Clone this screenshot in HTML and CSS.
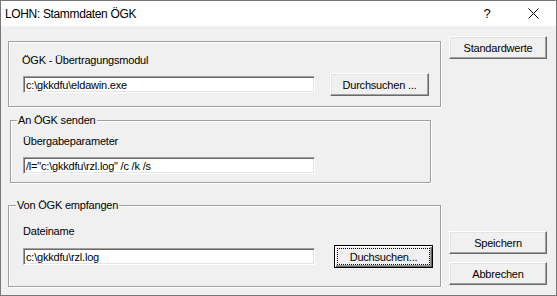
FILE: index.html
```html
<!DOCTYPE html>
<html lang="de">
<head>
    <meta charset="UTF-8">
    <title>LOHN: Stammdaten ÖGK</title>
    <link rel="stylesheet" href="styles.css">
</head>
<body>
    <div class="window">
        <div class="titlebar">
            <span class="title">LOHN: Stammdaten ÖGK</span>
            <span class="caption-btn help">?</span>
            <span class="caption-btn close">
                <svg width="11" height="11" viewBox="0 0 11 11"><path d="M0.5 0.5L10.5 10.5M10.5 0.5L0.5 10.5" stroke="#000" stroke-width="1" fill="none"/></svg>
            </span>
        </div>

        <div class="client">
            <div class="groups">
                <div class="group group-module">
                    <div class="label">ÖGK - Übertragungsmodul</div>
                    <div class="row row-module">
                        <input class="field" type="text" value="c:\gkkdfu\eldawin.exe">
                        <button class="btn btn-browse">Durchsuchen ...</button>
                    </div>
                </div>

                <fieldset class="group group-send">
                    <legend>An ÖGK senden</legend>
                    <div class="label">Übergabeparameter</div>
                    <input class="field" type="text" value='/l="c:\gkkdfu\rzl.log" /c /k /s'>
                </fieldset>

                <fieldset class="group group-receive">
                    <legend>Von ÖGK empfangen</legend>
                    <div class="label">Dateiname</div>
                    <div class="row row-receive">
                        <input class="field" type="text" value="c:\gkkdfu\rzl.log">
                        <button class="btn btn-browse btn-default"><span class="focus-ring">Duchsuchen...</span></button>
                    </div>
                </fieldset>
            </div>

            <div class="actions">
                <button class="btn">Standardwerte</button>
                <button class="btn btn-save">Speichern</button>
                <button class="btn btn-cancel">Abbrechen</button>
            </div>
        </div>
    </div>
</body>
</html>
```

FILE: styles.css
```css
* {
    box-sizing: border-box;
}
html, body {
    margin: 0;
    padding: 0;
}
body {
    font-family: "Liberation Sans", Arial, sans-serif;
    font-size: 11px;
    letter-spacing: -0.2px;
    color: #000;
    background: #f0f0f0;
}
.window {
    width: 557px;
    height: 296px;
    border: 1px solid #777;
    background: #f0f0f0;
    display: flex;
    flex-direction: column;
}
.titlebar {
    height: 25px;
    background: #fff;
    display: flex;
    align-items: center;
}
.title {
    flex: 1;
    padding-left: 4px;
    font-size: 12px;
    letter-spacing: -0.35px;
}
.caption-btn {
    width: 46px;
    height: 25px;
    display: flex;
    align-items: center;
    justify-content: center;
}
.help {
    font-size: 13px;
}
.close svg {
    display: block;
}
.client {
    flex: 1;
    display: flex;
    padding-left: 7px;
}
.groups {
    width: 433px;
    padding-top: 15px;
    display: flex;
    flex-direction: column;
}
.group {
    margin: 0;
    border: 1px solid #a0a0a0;
    box-shadow: inset 1px 1px 0 #fff, 1px 1px 0 #fff;
    min-width: 0;
}
.group legend {
    padding: 0 1px;
    font-size: 11px;
    line-height: 13px;
    background: #f0f0f0;
}
.label {
    line-height: 13px;
}
.group-module {
    height: 66px;
    padding: 12px 0 0 13px;
}
.group-send {
    width: 421px;
    margin: 7px 0 0 2px;
    padding: 8px 0 8px 12px;
}
.group-send legend {
    margin-left: -6px;
}
.group-send .field {
    display: block;
    margin-top: 9px;
}
.group-receive {
    width: 433px;
    margin-top: 16px;
    padding: 13px 0 18px 14px;
}
.group-receive legend {
    margin-left: -7px;
}
.row {
    display: flex;
    align-items: center;
}
.row-module {
    margin-top: 6px;
    padding-left: 1px;
    gap: 15px;
}
.row-receive {
    margin-top: 7px;
    gap: 19px;
}
.field {
    width: 292px;
    height: 17px;
    padding: 0 0 0 2px;
    border: 1px solid;
    border-color: #a0a0a0 #fff #fff #a0a0a0;
    box-shadow: inset 1px 1px 0 #696969, inset -1px -1px 0 #e3e3e3;
    background: #fff;
    font: inherit;
    letter-spacing: inherit;
    color: #000;
    outline: none;
}
.btn {
    height: 23px;
    padding: 0;
    border: 1px solid;
    border-color: #fff #696969 #696969 #fff;
    box-shadow: inset -1px -1px 0 #a0a0a0, inset 1px 1px 0 #e3e3e3;
    background: #f0f0f0;
    font: inherit;
    letter-spacing: inherit;
    color: #000;
}
.btn-browse {
    width: 99px;
}
.btn-default {
    display: flex;
    padding: 2px;
    border-color: #000;
    box-shadow: inset 1px 1px 0 #fff, inset -1px -1px 0 #696969, inset -2px -2px 0 #a0a0a0;
}
.focus-ring {
    flex: 1;
    display: flex;
    align-items: center;
    justify-content: center;
    border: 1px dotted #000;
}
.actions {
    width: 98px;
    margin-left: 8px;
    padding: 10px 0 10px 0;
    display: flex;
    flex-direction: column;
}
.actions .btn {
    width: 98px;
}
.btn-save {
    margin-top: auto;
}
.btn-cancel {
    margin-top: 8px;
}
```
